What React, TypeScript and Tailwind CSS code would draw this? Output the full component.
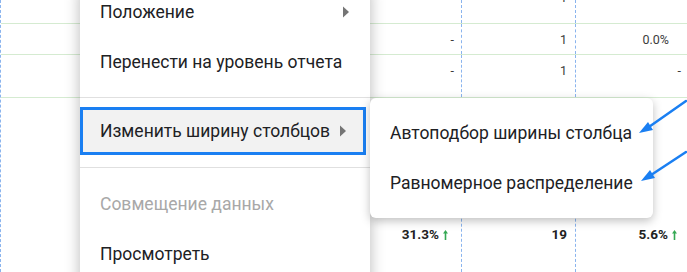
import React from "react";

const Tri = () => (
  <svg width="8" height="12" viewBox="0 0 8 12" className="shrink-0">
    <path d="M1 0.5 L7 6 L1 11.5 Z" fill="#757575" />
  </svg>
);

const Up = () => (
  <svg width="5" height="10" viewBox="0 0 5 10" className="ml-[4px] inline-block">
    <path d="M2.5 0 L5 3.4 L3.3 3.4 L3.3 10 L1.7 10 L1.7 3.4 L0 3.4 Z" fill="#34a853" />
  </svg>
);

type Cell = { v: React.ReactNode; pr: string };

function Row({ h, cells, offset }: { h: string; cells: Cell[]; offset?: string }) {
  const cols = ["w-[460px]", "w-[114px] border-l border-dashed border-[#8ab4ee]", "flex-1 border-l border-dashed border-[#8ab4ee]"];
  return (
    <div className={`flex ${h} border-b border-[#d5ebd1]`}>
      {cells.map((c, i) => (
        <div key={i} className={`${cols[i]} flex justify-end`}>
          <div className={`h-[31px] leading-[31px] text-[12.5px] text-[#3c3c3c] ${offset ?? ""} ${c.pr} flex items-center`}>
            {c.v}
          </div>
        </div>
      ))}
    </div>
  );
}

export default function App() {
  return (
    <div className="relative w-[687px] h-[272px] overflow-hidden bg-white font-['Roboto',sans-serif]">
      {/* table behind the menus */}
      <div className="border-l border-dashed border-[#8ab4ee] h-full flex flex-col">
        <Row
          h="h-[24px]"
          offset="-mt-[18px]"
          cells={[
            { v: "", pr: "pr-[7px]" },
            { v: "1", pr: "pr-[8px]" },
            { v: "", pr: "pr-[6px]" },
          ]}
        />
        <Row
          h="h-[31px]"
          cells={[
            { v: "-", pr: "pr-[7px]" },
            { v: "1", pr: "pr-[8px]" },
            { v: "0.0%", pr: "pr-[18px]" },
          ]}
        />
        <Row
          h="h-[43px]"
          cells={[
            { v: "-", pr: "pr-[7px]" },
            { v: "1", pr: "pr-[8px]" },
            { v: "-", pr: "pr-[6px]" },
          ]}
        />
        <div className="flex flex-1">
          <div className="w-[460px] flex justify-end pt-[121px]">
            <div className="h-[31px] flex items-center text-[13.5px] font-bold text-[#222] pr-[13px]">
              31.3%
              <Up />
            </div>
          </div>
          <div className="w-[114px] border-l border-dashed border-[#8ab4ee] flex justify-end pt-[121px]">
            <div className="h-[31px] flex items-center text-[13.5px] font-bold text-[#222] pr-[8px]">19</div>
          </div>
          <div className="flex-1 border-l border-dashed border-[#8ab4ee] flex justify-end pt-[121px]">
            <div className="h-[31px] flex items-center text-[13.5px] font-bold text-[#222] pr-[10px]">
              5.6%
              <Up />
            </div>
          </div>
        </div>
      </div>

      {/* context menu */}
      <div className="absolute left-[80px] top-[-13px] w-[290px] h-[300px] bg-white shadow-[0_2px_14px_rgba(0,0,0,0.28)] text-[17.5px] text-[#202124]">
        <div className="h-[50px] flex items-center justify-between pl-[20px] pr-[20px]">
          <span>Положение</span>
          <Tri />
        </div>
        <div className="h-[50px] flex items-center pl-[20px]">Перенести на уровень отчета</div>
        <div className="mt-[10px] border-t border-[#e0e0e0] pt-[9px]">
          <div className="w-[286px] h-[48px] border-[3px] border-[#1a7ff2] bg-[#f2f2f2] flex items-center justify-between pl-[17px] pr-[16px]">
            <span>Изменить ширину столбцов</span>
            <Tri />
          </div>
        </div>
        <div className="mt-[12px] border-t border-[#e0e0e0] pt-[11px]">
          <div className="h-[50px] flex items-center pl-[20px] text-[#a8a8a8]">Совмещение данных</div>
          <div className="h-[50px] flex items-center pl-[20px]">Просмотреть</div>
        </div>
      </div>

      {/* submenu */}
      <div className="absolute left-[370px] top-[98px] w-[283px] rounded-[6px] bg-white shadow-[0_3px_10px_rgba(0,0,0,0.25)] py-[10px] text-[17.5px] text-[#202124]">
        <div className="h-[50px] flex items-center pl-[20px]">Автоподбор ширины столбца</div>
        <div className="h-[50px] flex items-center pl-[20px]">Равномерное распределение</div>
      </div>

      {/* annotation arrows */}
      <svg className="absolute left-0 top-0" width="687" height="272" viewBox="0 0 687 272">
        <g stroke="#1a7ff2" strokeWidth="2.5" strokeLinecap="round">
          <line x1="686" y1="101" x2="646" y2="129" />
          <line x1="686" y1="152" x2="648" y2="177" />
        </g>
        <path d="M639 133 L648 122 L653 130 Z" fill="#1a7ff2" />
        <path d="M641 181 L650 170 L655 178 Z" fill="#1a7ff2" />
      </svg>
    </div>
  );
}
